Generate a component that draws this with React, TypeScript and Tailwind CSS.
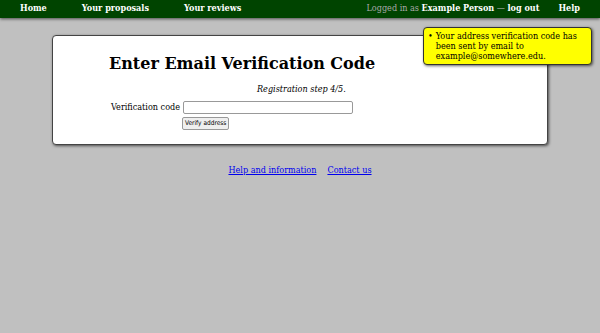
import React from "react";

export default function App() {
  return (
    <div className="relative min-h-[333px] w-[600px] bg-[#c0c0c0] text-black" style={{ fontFamily: '"DejaVu Serif Condensed", "DejaVu Serif", serif' }}>
      <div className="flex h-[18px] items-center bg-[#004400] pl-[20px] pr-[20px] text-[9px] font-bold text-white shadow-[0_1px_3px_rgba(0,0,0,0.6)]">
        <span>Home</span>
        <span className="ml-[35px]">Your proposals</span>
        <span className="ml-[35px]">Your reviews</span>
        <span className="ml-auto font-normal text-[#aaaaaa]">Logged in as <span className="font-bold text-white">Example Person</span> — <span className="font-bold text-white">log out</span></span>
        <span className="ml-[19px]">Help</span>
      </div>
      <div className="mx-[52px] mt-[17px] rounded-[4px] border border-[#444] bg-white pb-[14px] shadow-[1px_1px_3px_rgba(0,0,0,0.6)]">
        <h1 className="ml-[56px] mt-[18px] text-[16px] font-bold leading-[20px]" style={{ fontFamily: '"DejaVu Serif", serif' }}>Enter Email Verification Code</h1>
        <div className="ml-[204px] mt-[9px] text-[9px] italic leading-[12px]">Registration step 4/5.</div>
        <div className="mt-[6px] flex items-center text-[9px]">
          <span className="w-[127px] text-right">Verification code</span>
          <input className="ml-[3px] h-[13px] w-[170px] rounded-[2px] border border-[#999] bg-white" />
        </div>
        <div className="ml-[129px] mt-[2px] flex">
          <button className="h-[13px] rounded-[2px] border border-[#999] bg-[#efefef] px-[2px] text-[6.5px] leading-[11px]" style={{ fontFamily: '"DejaVu Sans Condensed", "DejaVu Sans", sans-serif' }}>Verify address</button>
        </div>
      </div>
      <div className="mt-[19px] flex justify-center gap-[11px] text-[9px] text-[#0000ee]">
        <a href="#" className="underline">Help and information</a>
        <a href="#" className="underline">Contact us</a>
      </div>
      <div className="absolute left-[423px] top-[27px] w-[169px] rounded-[4px] border border-[#333] bg-[#ffff00] py-[3px] pl-[4px] pr-[4px] text-[9px] leading-[10px] shadow-[1px_1px_3px_rgba(0,0,0,0.6)]">
        <div className="flex">
          <span className="mr-[3px]">•</span>
          <span>Your address verification code has been sent by email to example@somewhere.edu.</span>
        </div>
      </div>
    </div>
  );
}
